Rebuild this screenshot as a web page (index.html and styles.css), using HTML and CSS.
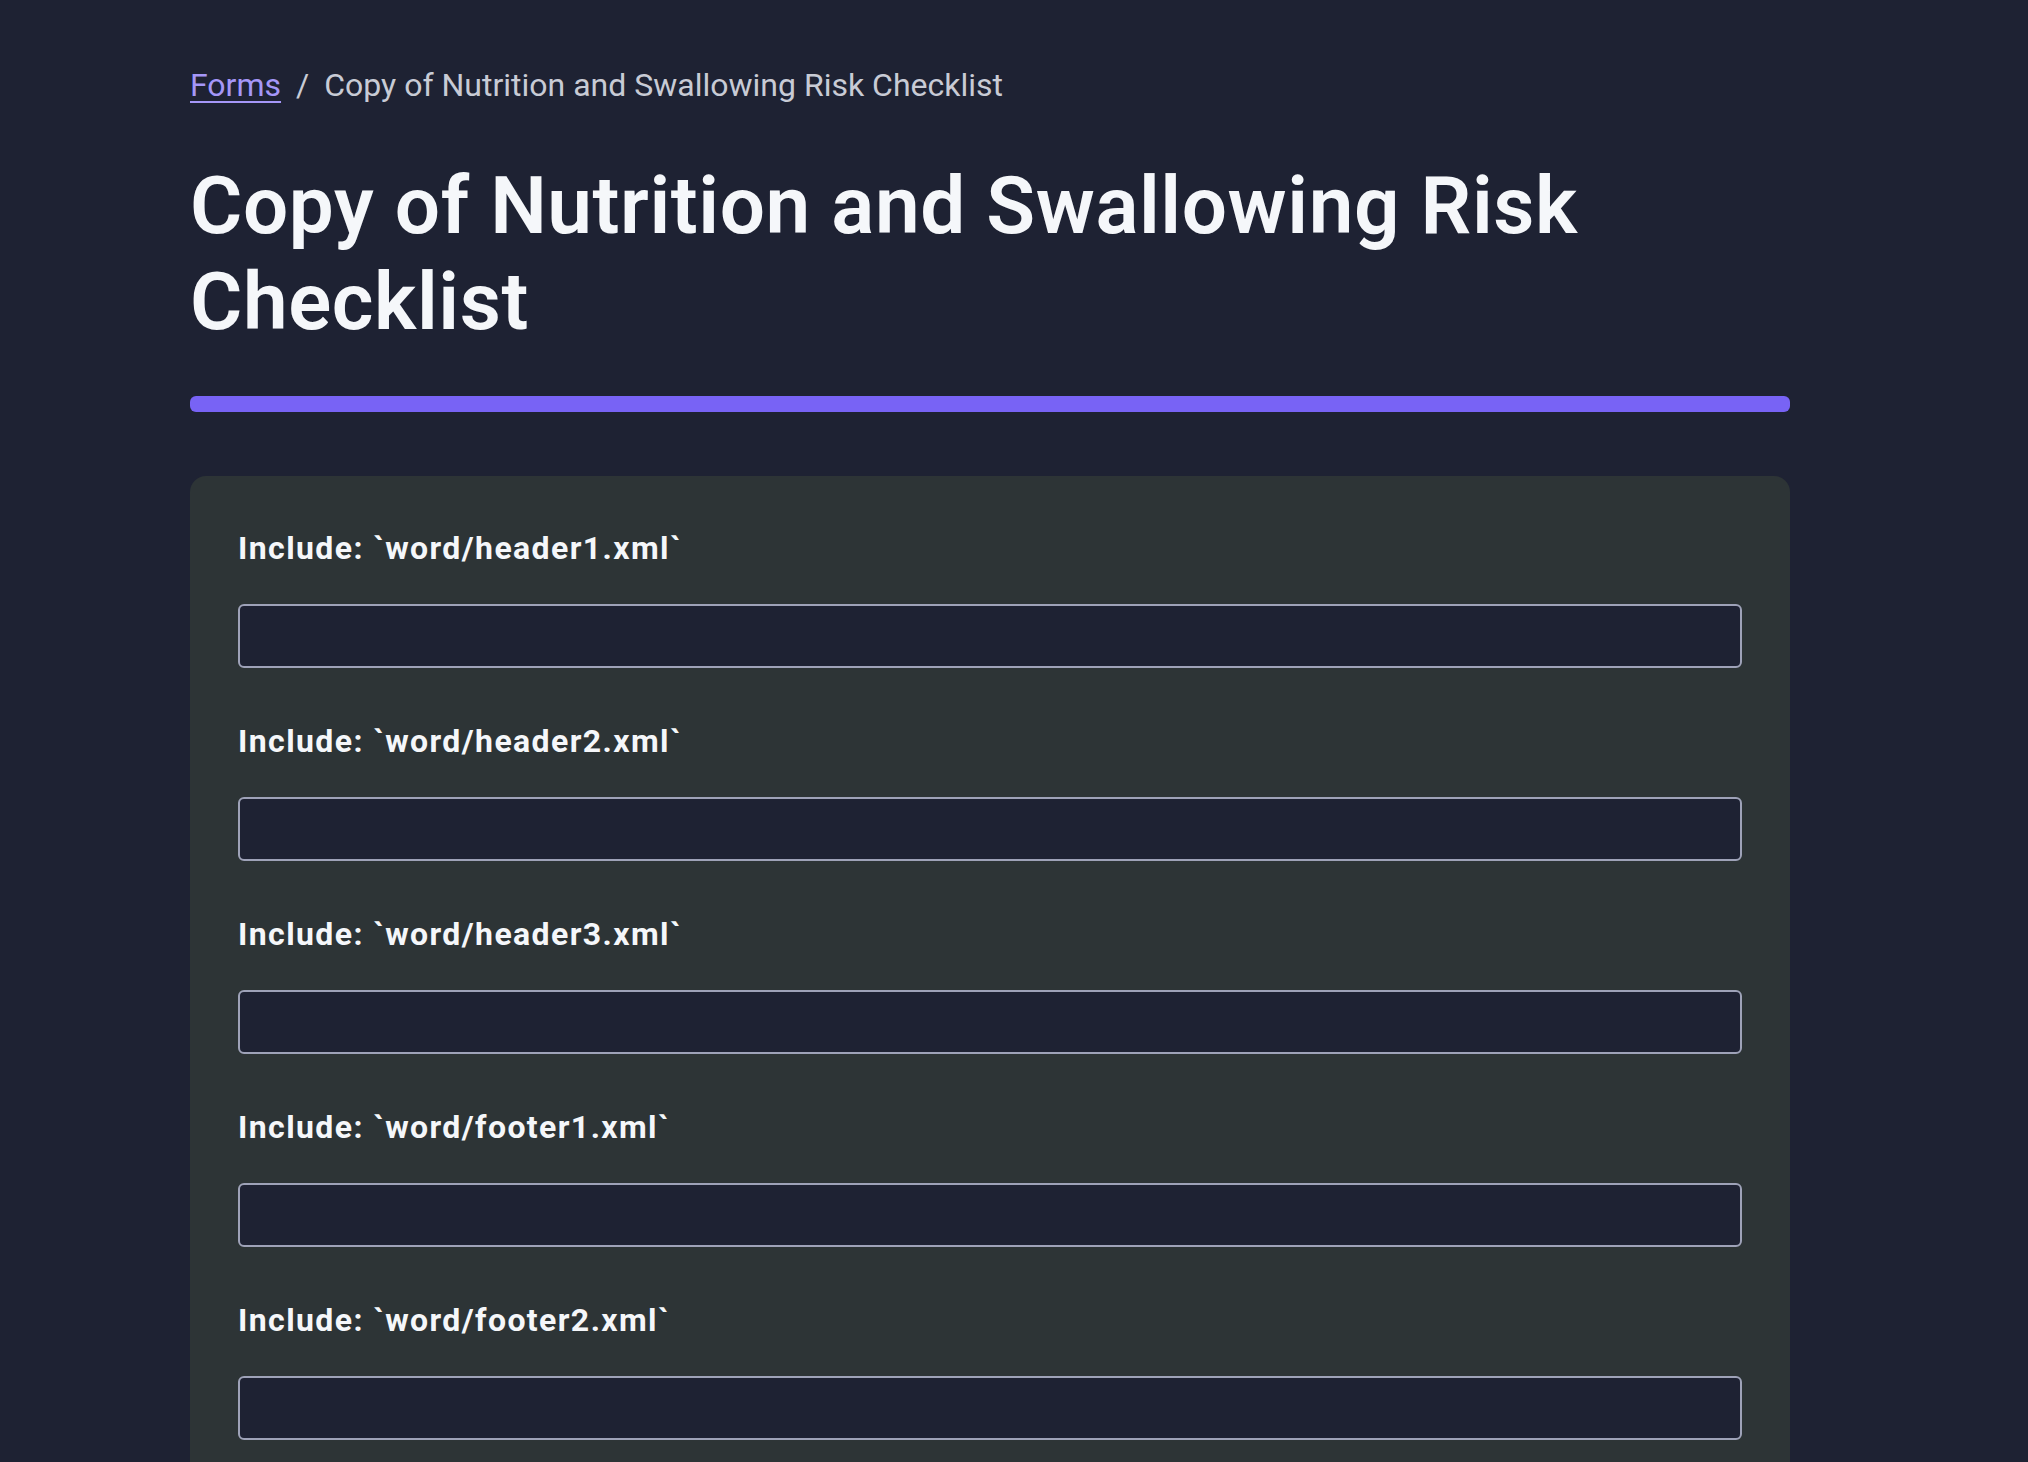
FILE: index.html
```html
<!DOCTYPE html>
<html lang="en">
<head>
<meta charset="utf-8">
<title>Copy of Nutrition and Swallowing Risk Checklist</title>
<link rel="stylesheet" href="styles.css">
</head>
<body>
<main class="page">
  <nav class="breadcrumb">
    <a class="crumb-link" href="#">Forms</a>
    <span class="crumb-sep">/</span>
    <span class="crumb-current">Copy of Nutrition and Swallowing Risk Checklist</span>
  </nav>
  <h1 class="title">Copy of Nutrition and Swallowing Risk Checklist</h1>
  <div class="progress"></div>
  <form class="card">
    <div class="field">
      <label class="label" for="f1">Include: `word/header1.xml`</label>
      <input class="input" id="f1" type="text">
    </div>
    <div class="field">
      <label class="label" for="f2">Include: `word/header2.xml`</label>
      <input class="input" id="f2" type="text">
    </div>
    <div class="field">
      <label class="label" for="f3">Include: `word/header3.xml`</label>
      <input class="input" id="f3" type="text">
    </div>
    <div class="field">
      <label class="label" for="f4">Include: `word/footer1.xml`</label>
      <input class="input" id="f4" type="text">
    </div>
    <div class="field">
      <label class="label" for="f5">Include: `word/footer2.xml`</label>
      <input class="input" id="f5" type="text">
    </div>
  </form>
</main>
</body>
</html>
```

FILE: styles.css
```css
html, body {
  margin: 0;
  padding: 0;
  background: #1e2233;
}

body {
  font-family: Roboto, "Noto Sans", "Liberation Sans", sans-serif;
  color: #f5f7fa;
}

.page {
  width: 1600px;
  padding: 61px 0 80px 190px;
}

.breadcrumb {
  display: flex;
  align-items: baseline;
  font-size: 32px;
  line-height: 48px;
  color: #c8cbd5;
}

.crumb-link {
  color: #a597f8;
  text-decoration: underline;
  text-underline-offset: 5px;
  text-decoration-thickness: 2px;
}

.crumb-sep {
  margin: 0 15px 0 15px;
}

.title {
  margin: 49px 0 0;
  font-size: 80px;
  line-height: 96px;
  font-weight: 600;
  letter-spacing: 0.6px;
  color: #f5f7fa;
}

.progress {
  margin-top: 46px;
  height: 16px;
  border-radius: 6px;
  background: #7863f5;
}

.card {
  margin-top: 64px;
  background: #2d3436;
  border-radius: 16px;
  padding: 48px;
  display: flex;
  flex-direction: column;
  gap: 49px;
}

.field {
  display: flex;
  flex-direction: column;
  gap: 32px;
}

.label {
  font-size: 32px;
  line-height: 48px;
  font-weight: 700;
  letter-spacing: 1.4px;
  color: #f5f7fa;
}

.input {
  box-sizing: border-box;
  height: 64px;
  width: 100%;
  margin: 0;
  background: #1e2233;
  border: 2px solid #9ea2b8;
  border-radius: 6px;
  color: #f5f7fa;
  font-size: 28px;
  padding: 0 16px;
}
```
